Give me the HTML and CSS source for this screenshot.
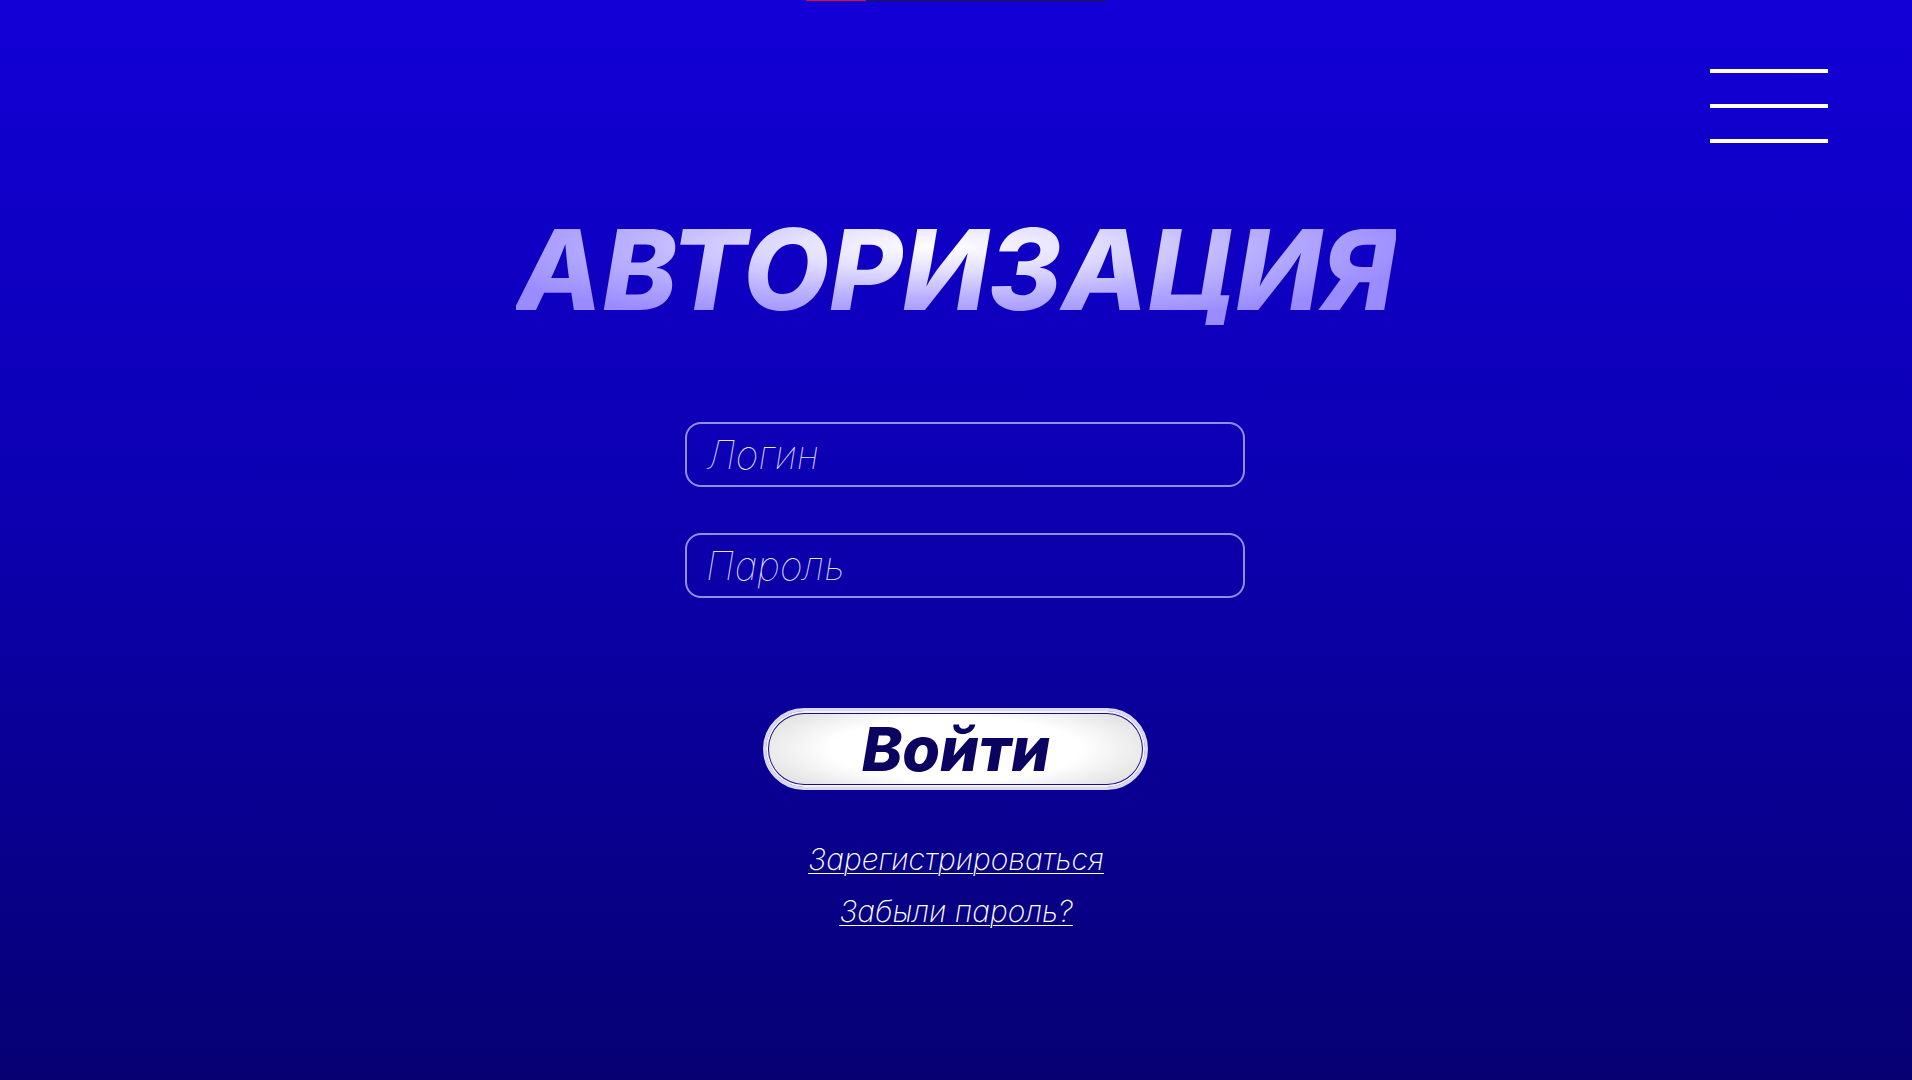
FILE: index.html
```html
<!DOCTYPE html>
<html lang="ru">
<head>
<meta charset="utf-8">
<title>Авторизация</title>
<link rel="stylesheet" href="styles.css">
</head>
<body>
<div class="page">
  <div class="topline"><span class="topline-red"></span><span class="topline-dark"></span></div>
  <header class="header">
    <button class="burger" type="button" aria-label="Меню">
      <span class="burger-line"></span>
      <span class="burger-line"></span>
      <span class="burger-line"></span>
    </button>
  </header>
  <main class="auth">
    <h1 class="title">АВТОРИЗАЦИЯ</h1>
    <form class="form">
      <input class="field" type="text" placeholder="Логин">
      <input class="field" type="password" placeholder="Пароль">
      <button class="submit" type="button">Войти</button>
    </form>
    <nav class="links">
      <a class="link" href="#">Зарегистрироваться</a>
      <a class="link" href="#">Забыли пароль?</a>
    </nav>
  </main>
</div>
</body>
</html>
```

FILE: styles.css
```css
html, body {
  margin: 0;
  padding: 0;
}

body {
  min-height: 100vh;
  background: linear-gradient(180deg, #1200d6 0%, #0c00b2 45%, #060072 100%);
  font-family: Inter, "Noto Sans", sans-serif;
  color: #ffffff;
}

.page {
  min-height: 100vh;
  display: flex;
  flex-direction: column;
  align-items: center;
}

.topline {
  display: flex;
  width: 301px;
  height: 1px;
}

.topline-red {
  width: 60px;
  background: #e0102a;
}

.topline-dark {
  flex: 1;
  background: #1f1a3a;
}

.header {
  align-self: stretch;
  display: flex;
  justify-content: flex-end;
  padding: 68px 84px 0 0;
}

.burger {
  display: flex;
  flex-direction: column;
  gap: 31px;
  width: 118px;
  padding: 0;
  margin: 0;
  border: 0;
  background: none;
  cursor: pointer;
}

.burger-line {
  display: block;
  width: 118px;
  height: 4px;
  background: #ffffff;
}

.auth {
  display: flex;
  flex-direction: column;
  align-items: center;
}

.title {
  margin: 70px 0 0;
  font-size: 112px;
  line-height: 112px;
  font-weight: 800;
  font-style: italic;
  letter-spacing: 0;
  background: radial-gradient(ellipse 55% 70% at 48% 30%, #ffffff 0%, #e4e0ff 30%, #b9b0ff 65%, #9a8cff 100%);
  -webkit-background-clip: text;
  background-clip: text;
  color: transparent;
}

.form {
  display: flex;
  flex-direction: column;
  align-items: center;
  margin-top: 97px;
}

.field {
  box-sizing: border-box;
  width: 560px;
  height: 65px;
  margin: 0 0 46px 18px;
  padding: 0 0 0 19px;
  border: 2px solid rgba(170, 166, 238, 0.85);
  border-radius: 16px;
  background: transparent;
  font-family: Inter, "Noto Sans", sans-serif;
  font-size: 39px;
  font-weight: 100;
  font-style: italic;
  color: #ffffff;
  outline: none;
}

.field::placeholder {
  color: #e6e4ff;
  opacity: 1;
}

.submit {
  box-sizing: border-box;
  width: 385px;
  height: 82px;
  margin-top: 64px;
  padding: 0;
  border: 3px solid #d9d6f6;
  border-radius: 41px;
  background: radial-gradient(ellipse 60% 75% at 50% 50%, #ffffff 55%, #dcdcdc 100%);
  box-shadow: inset 0 0 0 2px #f4f4f4, inset 0 0 0 3px #1a0f86;
  font-family: Inter, "Noto Sans", sans-serif;
  font-size: 61px;
  font-weight: 800;
  font-style: italic;
  color: #0b0360;
  line-height: 1;
  cursor: pointer;
}

.links {
  display: flex;
  flex-direction: column;
  align-items: center;
  margin-top: 43px;
}

.link {
  font-size: 30px;
  line-height: 52px;
  font-weight: 200;
  font-style: italic;
  color: #ffffff;
  text-decoration: underline;
  text-decoration-thickness: 1px;
  text-underline-offset: 3px;
}
```
